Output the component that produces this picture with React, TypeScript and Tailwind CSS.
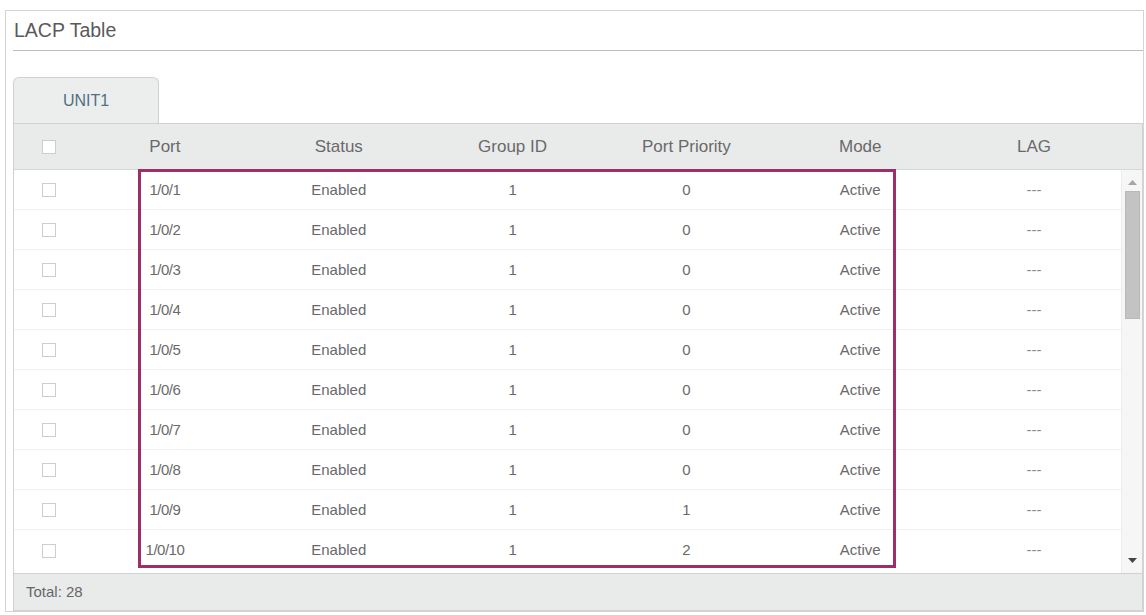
const rows = [
  { port: "1/0/1", prio: "0" },
  { port: "1/0/2", prio: "0" },
  { port: "1/0/3", prio: "0" },
  { port: "1/0/4", prio: "0" },
  { port: "1/0/5", prio: "0" },
  { port: "1/0/6", prio: "0" },
  { port: "1/0/7", prio: "0" },
  { port: "1/0/8", prio: "0" },
  { port: "1/0/9", prio: "1" },
  { port: "1/0/10", prio: "2" },
];

function Checkbox() {
  return <span className="block w-[14px] h-[14px] border border-[#cdcdcd] bg-white" />;
}

export default function App() {
  return (
    <div
      className="w-[1146px] h-[615px] bg-white pt-[10px] pl-[5px]"
      style={{ fontFamily: '"Liberation Sans", Arial, sans-serif' }}
    >
      <div className="w-[1139px] h-[602px] border border-[#d4d4d4] pl-[7px] flex flex-col">
        {/* title */}
        <div className="h-[40px] border-b border-[#bdbdbd] flex items-center pl-[1px] text-[19.5px] text-[#5a5a5a]">
          LACP Table
        </div>

        {/* tab */}
        <div className="mt-[26px] flex">
          <div className="w-[146px] h-[47px] -mb-px rounded-t-[6px] border border-b-0 border-[#cfd2d2] bg-[#eceeee] flex items-center justify-center text-[16px] text-[#52707e]">
            UNIT1
          </div>
        </div>

        {/* table */}
        <div className="relative border border-[#cfd2d2] flex flex-col">
          <div className="grid grid-cols-[64px_repeat(6,1fr)_21px] h-[46px] bg-[#e9ebeb] border-b border-[#d6d8d8] items-center text-[17px] text-[#696969]">
            <div className="flex justify-center pl-[6px]">
              <Checkbox />
            </div>
            <div className="text-center">Port</div>
            <div className="text-center">Status</div>
            <div className="text-center">Group ID</div>
            <div className="text-center">Port Priority</div>
            <div className="text-center">Mode</div>
            <div className="text-center">LAG</div>
            <div />
          </div>

          <div className="flex">
            <div className="flex-1 pb-[3px]">
              {rows.map((r, i) => (
                <div
                  key={r.port}
                  className={
                    "grid grid-cols-[64px_repeat(6,1fr)] h-[40px] items-center text-[15px] text-[#6a6a6a] pt-[1px] " +
                    (i < rows.length - 1 ? "border-b border-[#f1f1f1]" : "")
                  }
                >
                  <div className="flex justify-center pl-[6px]">
                    <Checkbox />
                  </div>
                  <div className="text-center tracking-[-0.5px]">{r.port}</div>
                  <div className="text-center">Enabled</div>
                  <div className="text-center">1</div>
                  <div className="text-center">{r.prio}</div>
                  <div className="text-center">Active</div>
                  <div className="text-center text-[#8a8a8a]">---</div>
                </div>
              ))}
            </div>

            {/* scrollbar */}
            <div className="w-[21px] bg-[#f6f6f6] border-l border-[#ececec] flex flex-col items-center pt-[10px] pb-[10px]">
              <svg width="9" height="5" viewBox="0 0 9 5" className="mb-[6px]">
                <path d="M0 5 L4.5 0 L9 5 Z" fill="#a6a6a6" />
              </svg>
              <div className="w-[15px] h-[128px] bg-[#c3c3c3] border border-[#b9b9b9]" />
              <div className="flex-1" />
              <svg width="9" height="5" viewBox="0 0 9 5">
                <path d="M0 0 L9 0 L4.5 5 Z" fill="#444" />
              </svg>
            </div>
          </div>

          {/* footer */}
          <div className="h-[37px] bg-[#e9ebeb] border-t border-[#cfd2d2] flex items-center pl-[12px] text-[15px] text-[#666]">
            Total: 28
          </div>

          {/* highlight */}
          <div className="absolute left-[124px] top-[45px] w-[758px] h-[399px] border-[3px] border-[#9f2d6a] pointer-events-none" />
        </div>
      </div>
    </div>
  );
}
